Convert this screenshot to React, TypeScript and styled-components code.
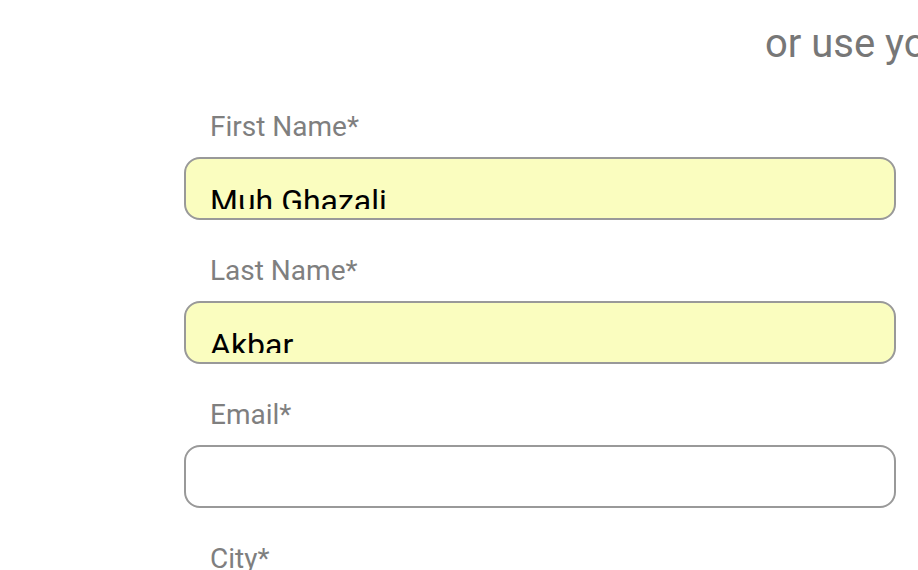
import React from "react";
import styled, { createGlobalStyle } from "styled-components";

type Field = {
  label: string;
  value?: string;
  filled?: boolean;
};

const fields: Field[] = [
  { label: "First Name*", value: "Muh Ghazali", filled: true },
  { label: "Last Name*", value: "Akbar", filled: true },
  { label: "Email*" },
  { label: "City*" },
];

const App = () => {
  return (
    <Page>
      <GlobalStyle />
      <Heading>or use your email</Heading>
      <Form>
        {fields.map((field, index) => (
          <Group key={index}>
            <Label>{field.label}</Label>
            <Input filled={field.filled}>
              <Value>{field.value}</Value>
            </Input>
          </Group>
        ))}
      </Form>
    </Page>
  );
};

const GlobalStyle = createGlobalStyle`
  html, body {
    margin: 0;
    padding: 0;
    background: #ffffff;
    font-family: Roboto, "Liberation Sans", Arial, sans-serif;
  }
`;

const Page = styled.div`
  width: 918px;
  height: 570px;
  overflow: hidden;
  background: #fff;
`;

const Heading = styled.h2`
  margin: 20px 0 0;
  padding-left: 765px;
  font-size: 40px;
  line-height: 48px;
  font-weight: 400;
  color: #777777;
  white-space: nowrap;
`;

const Form = styled.div`
  display: flex;
  flex-direction: column;
  gap: 36px;
  width: 712px;
  margin: 44px 0 0 184px;
`;

const Group = styled.div`
  display: flex;
  flex-direction: column;
  gap: 15px;
`;

const Label = styled.label`
  padding-left: 26px;
  font-size: 28px;
  line-height: 30px;
  color: #7f7f7f;
`;

const Input = styled.div<{ filled?: boolean }>`
  box-sizing: border-box;
  height: 63px;
  padding: 0 24px 9px;
  border: 2px solid #999999;
  border-radius: 16px;
  background: ${(p) => (p.filled ? "#fafdbf" : "#ffffff")};
`;

const Value = styled.div`
  box-sizing: border-box;
  height: 100%;
  overflow: hidden;
  padding-top: 24px;
  font-size: 32px;
  line-height: 36px;
  color: #000;
  white-space: nowrap;
`;

export default App;
